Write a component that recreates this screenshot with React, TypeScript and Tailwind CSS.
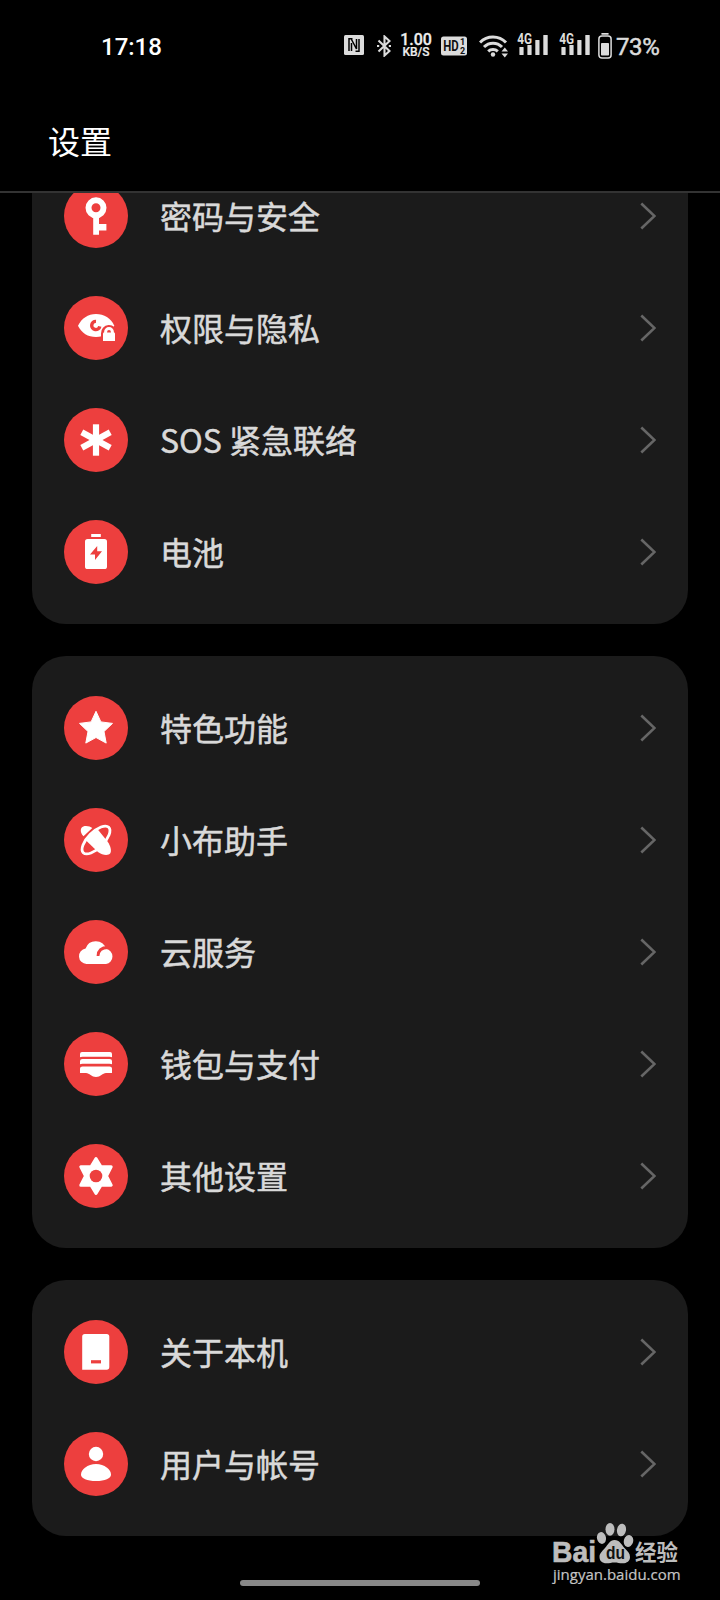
import { ReactNode } from "react";

interface SettingItem {
  label: string;
  icon: ReactNode;
}

const RED = "#ed3f3e";

const KeyIcon = (
  <>
    <circle cx="32" cy="23.8" r="7.5" fill="none" stroke="#fff" strokeWidth="6" />
    <path d="M29.200 32H35v8h7.400v6.600H35v4.100h-5.800z" fill="#fff" />
  </>
);

const PrivacyIcon = (
  <>
    <path d="M14 29.700C17.500 22.500 24 18 32 18s15 4.200 18.300 11.700C46.500 37 40 41 32 41S17.500 37 14 29.700z" fill="#fff" />
    <path d="M35.800 30.300A4.100 4.100 0 1 1 32 25.400" fill="none" stroke={RED} strokeWidth="3.400" />
    <path d="M37 47v-9.500a8 8 0 0 1 16-1V47z" fill={RED} />
    <path d="M41.600 37.500V36a3.400 3.400 0 0 1 6.800 0v1.500" fill="none" stroke="#fff" strokeWidth="3" />
    <path d="M39 37.500q0-1 1-1h10q1 0 1 1V45H39z" fill="#fff" />
  </>
);

const SosIcon = (
  <g stroke="#fff" strokeWidth="6.200">
    <path d="M32 16.300v31.400" />
    <path d="M17.800 24.300l28.400 15.400" />
    <path d="M46.200 24.300L17.800 39.700" />
  </g>
);

const BatteryIcon = (
  <>
    <rect x="27.200" y="14" width="9.600" height="3" fill="#fff" />
    <rect x="21" y="19" width="22" height="30" rx="2.600" fill="#fff" />
    <path d="M33.200 26L26 34.600h5V40l7-8.800h-4.800z" fill={RED} />
  </>
);

const StarIcon = (
  <path
    d="M32 15.300l4.900 10.600 11.600 1.500-8.500 8.100 2.200 11.600L32 41.500l-10.200 5.600L24 35.500l-8.500-8.100 11.600-1.500z"
    fill="#fff"
    stroke="#fff"
    strokeWidth="1"
    strokeLinejoin="round"
  />
);

const AssistantIcon = (
  <>
    <path d="M17.300 25C15.800 20.500 18 18 22 18c2.600 0 4.700.8 6.300 1.900L19.500 28.300C18.500 27.300 17.700 26.200 17.300 25z" fill="#fff" />
    <ellipse cx="32" cy="32" rx="18" ry="8" transform="rotate(-45 32 32)" fill="none" stroke="#fff" strokeWidth="2.800" />
    <path d="M21 31.500L26 25.500 33 20.500 43.500 33.500C47 38.500 47.600 43 46.300 45.300 44.500 48 38.500 47.500 34 44z" fill="#fff" />
  </>
);

const CloudIcon = (
  <>
    <path d="M22.500 44a7.800 7.800 0 0 1-.9-15.500A10.700 10.700 0 0 1 42 28.800 7.700 7.700 0 0 1 42 44z" fill="#fff" />
    <path d="M34 36c.2-5.500 3.200-8.700 10.500-8.500" fill="none" stroke={RED} strokeWidth="2.800" />
  </>
);

const WalletIcon = (
  <g fill="#fff">
    <path d="M18 20h28q2 0 2 2v3.300q-.6-.6-2.500-.6h-27q-1.900 0-2.500.6V22q0-2 2-2z" />
    <path d="M18.500 27h27q2.500 0 2.500 2v3.300q-.6-.6-2.500-.6h-27q-1.900 0-2.500.6V29q0-2 2.500-2z" />
    <path d="M18.500 34.500h27q2.500 0 2.500 2V41h-6c-3.500 0-5.500 4-10 4s-6.500-4-10-4h-6v-4.500q0-2 2.500-2z" />
  </g>
);

const GearIcon = (
  <>
    <path
      d="M32 14.500l5 8.300h10.200L42.500 32l4.700 9.200H37l-5 8.300-5-8.300H16.800l4.700-9.200-4.700-9.200H27z"
      fill="#fff"
      stroke="#fff"
      strokeWidth="3"
      strokeLinejoin="round"
    />
    <circle cx="32" cy="32" r="6.300" fill={RED} />
  </>
);

const PhoneIcon = (
  <>
    <path d="M20.800 14h21.900q2.600 0 2.600 2.600v30.500q0 2.600-2.600 2.600H18.200V16.600q0-2.600 2.600-2.600z" fill="#fff" />
    <rect x="27" y="40.200" width="10" height="3.200" fill={RED} />
  </>
);

const UserIcon = (
  <g fill="#fff">
    <circle cx="32" cy="22" r="7.200" />
    <path d="M32 32c8.500 0 15 5.500 15 10.500 0 4-6 6.500-15 6.500s-15-2.500-15-6.500C17 37.500 23.500 32 32 32z" />
  </g>
);

const groups: SettingItem[][] = [
  [
    { label: "密码与安全", icon: KeyIcon },
    { label: "权限与隐私", icon: PrivacyIcon },
    { label: "SOS 紧急联络", icon: SosIcon },
    { label: "电池", icon: BatteryIcon },
  ],
  [
    { label: "特色功能", icon: StarIcon },
    { label: "小布助手", icon: AssistantIcon },
    { label: "云服务", icon: CloudIcon },
    { label: "钱包与支付", icon: WalletIcon },
    { label: "其他设置", icon: GearIcon },
  ],
  [
    { label: "关于本机", icon: PhoneIcon },
    { label: "用户与帐号", icon: UserIcon },
  ],
];

const Row = ({ item }: { item: SettingItem }) => (
  <li className="flex h-28 items-center px-8">
    <svg viewBox="0 0 64 64" className="size-16 shrink-0">
      <circle cx="32" cy="32" r="32" fill={RED} />
      {item.icon}
    </svg>
    <span className="mb-0.5 ml-8 flex-1 text-[32px] leading-none text-[#d9d9d9] [-webkit-text-stroke:0.5px_#d9d9d9]">
      {item.label}
    </span>
    <svg viewBox="0 0 16 28" className="h-7 w-4 shrink-0" fill="none" stroke="#666666" strokeWidth="2.600">
      <path d="M1.300 1.500L14.500 14 1.300 26.500" />
    </svg>
  </li>
);

const Signal = () => (
  <svg viewBox="0 0 32 24" className="h-6 w-8 shrink-0 overflow-visible" fill="#dcdcdc">
    <rect x="2.400" y="14" width="4.200" height="8" rx="0.600" />
    <rect x="10.400" y="12" width="4.200" height="10" rx="0.600" />
    <rect x="18.300" y="7" width="4.200" height="15" rx="0.600" />
    <rect x="26.300" y="2" width="4.400" height="20" rx="0.600" />
    <text
      x="0.300"
      y="10.700"
      textLength="14.800"
      lengthAdjust="spacingAndGlyphs"
      className="font-['Roboto'] text-[14px] font-bold"
      stroke="#000"
      strokeWidth="1.200"
      paintOrder="stroke"
    >
      4G
    </text>
  </svg>
);

const StatusBar = () => (
  <div className="flex h-[92px] items-center pt-0.5 font-['Roboto',sans-serif] text-[#dcdcdc]">
    <span className="ml-[101px] w-[61px] text-2xl leading-none font-medium text-white">17:18</span>
    {/* nfc */}
    <svg viewBox="0 0 20 20" className="mb-1 ml-[182px] size-5 shrink-0">
      <rect width="20" height="20" rx="1.500" fill="#dcdcdc" />
      <path d="M8.500 3.800H5V16M7.500 4.500L12.500 14V4M7.500 8v8M11.500 16.200H15V4" fill="none" stroke="#000" strokeWidth="1.500" />
    </svg>
    {/* bluetooth */}
    <svg viewBox="0 0 14 22" className="mb-0.5 ml-[13px] h-[22px] w-3.5 shrink-0" fill="none" stroke="#dcdcdc" strokeWidth="2.100">
      <path d="M1.500 5.500L12.500 16 7.500 20.500V1.500l5 4.500L1.500 16.500" />
      <path d="M0 11h2.200M11.800 11H14" />
    </svg>
    <div className="mb-1 ml-[9px] flex w-8 flex-col items-center font-medium text-[#eeeeee]">
      <span className="text-[16px] leading-[15px] [-webkit-text-stroke:0.3px_#eeeeee]">1.00</span>
      <span className="text-[12px] leading-[11px] [-webkit-text-stroke:0.2px_#eeeeee]">KB/S</span>
    </div>
    {/* hd 1/2 */}
    <svg viewBox="0 0 26 20" className="ml-[9px] mb-0.5 h-5 w-[26px] shrink-0">
      <rect y="0.500" width="26" height="19" rx="2.500" fill="#dcdcdc" />
      <g className="font-['Roboto'] font-bold" fill="#111">
        <text x="2.300" y="15.200" textLength="15.500" lengthAdjust="spacingAndGlyphs" className="text-[14px]">HD</text>
        <text x="19" y="9.300" className="text-[9px]">1</text>
        <text x="19" y="17.800" className="text-[9px]">2</text>
      </g>
    </svg>
    {/* wifi */}
    <svg viewBox="0 0 29 24" className="mb-0.5 ml-3 h-6 w-[29px] shrink-0" fill="none" stroke="#dcdcdc" strokeWidth="3">
      <path d="M1 8.500a18 18 0 0 1 26 0" />
      <path d="M5 13a12.500 12.500 0 0 1 18 0" />
      <path d="M9.200 17.300a7 7 0 0 1 9.600 0" />
      <circle cx="14" cy="20.500" r="2.200" fill="#dcdcdc" stroke="none" />
      <path d="M22.500 17.500l3.300-4 3.200 4zM22.500 19.500l3.300 4 3.200-4z" fill="#dcdcdc" stroke="none" />
    </svg>
    <div className="mb-1 ml-[9px] flex gap-2.5">
      <Signal />
      <Signal />
    </div>
    {/* battery */}
    <svg viewBox="0 0 14 26" className="mb-0.5 ml-[7px] h-[26px] w-3.5 shrink-0">
      <rect x="3.300" width="7.400" height="1.700" rx="0.600" fill="#dcdcdc" />
      <rect x="0.900" y="3" width="12.200" height="22" rx="3" fill="none" stroke="#dcdcdc" strokeWidth="1.500" />
      <rect x="3" y="10" width="8" height="12.500" rx="0.800" fill="#dcdcdc" />
    </svg>
    <span className="ml-1 text-2xl leading-none tracking-[-0.4px] [-webkit-text-stroke:0.5px_#dcdcdc]">73%</span>
  </div>
);

const Watermark = () => (
  <div className="absolute top-[1521px] left-[553px] flex flex-col text-[#c4c4c4]">
    <svg viewBox="0 0 130 44" className="h-11 w-[130px] overflow-visible" fill="#bdbdbd">
      <text x="-1" y="41" textLength="44" lengthAdjust="spacingAndGlyphs" className="font-['Liberation_Sans'] text-[29px] font-bold" stroke="#bdbdbd" strokeWidth="0.600">
        Bai
      </text>
      <ellipse cx="48.500" cy="17" rx="4.500" ry="6" transform="rotate(-12 48.500 17)" />
      <ellipse cx="57" cy="8.300" rx="4.500" ry="6.400" />
      <ellipse cx="68.500" cy="9" rx="4.500" ry="6.400" transform="rotate(10 68.500 9)" />
      <ellipse cx="75.500" cy="20" rx="4.700" ry="6" transform="rotate(15 75.500 20)" />
      <path d="M61.500 19c5 0 7 4.500 10 8 3.500 3.500 5.500 5.500 5.500 9 0 4-3 6.300-7.500 6.300-3 0-5-.8-8-.8s-5 .8-8 .8c-4.500 0-7-2.300-7-6.500 0-3.500 2.500-5.300 5.500-8.800 3-3.500 5-8 9.500-8z" />
      <text x="53" y="38" textLength="19" lengthAdjust="spacingAndGlyphs" fill="#111" className="font-['Liberation_Sans'] text-[18px] font-bold">
        du
      </text>
      <text x="82" y="39" textLength="43" lengthAdjust="spacingAndGlyphs" className="font-['Noto_Sans_CJK_SC'] text-[22px] font-bold">
        经验
      </text>
    </svg>
    <span className="font-['Open_Sans',sans-serif] text-[15px] leading-[18px] [-webkit-text-stroke:0.2px_#c4c4c4]">
      jingyan.baidu.com
    </span>
  </div>
);

const App = () => {
  return (
    <div className="relative flex h-[1600px] w-[720px] flex-col overflow-hidden bg-black font-['Noto_Sans_CJK_SC',sans-serif]">
      <header className="flex h-[193px] shrink-0 flex-col border-b-2 border-[#333333]">
        <StatusBar />
        <h1 className="flex flex-1 items-center pb-1 pl-12 text-[32px] leading-none text-white">设置</h1>
      </header>
      <main className="flex-1 overflow-hidden">
        {/* list is scrolled, so the first card starts above the viewport */}
        <div className="-mt-[49px] flex flex-col gap-8 px-8">
          {groups.map((group, i) => (
            <ul key={i} className="rounded-[34px] bg-[#1b1b1b] py-4">
              {group.map((item) => (
                <Row key={item.label} item={item} />
              ))}
            </ul>
          ))}
        </div>
      </main>
      <div className="absolute bottom-3.5 left-60 h-1.5 w-60 rounded-full bg-[#888888]" />
      <Watermark />
    </div>
  );
};

export default App;
